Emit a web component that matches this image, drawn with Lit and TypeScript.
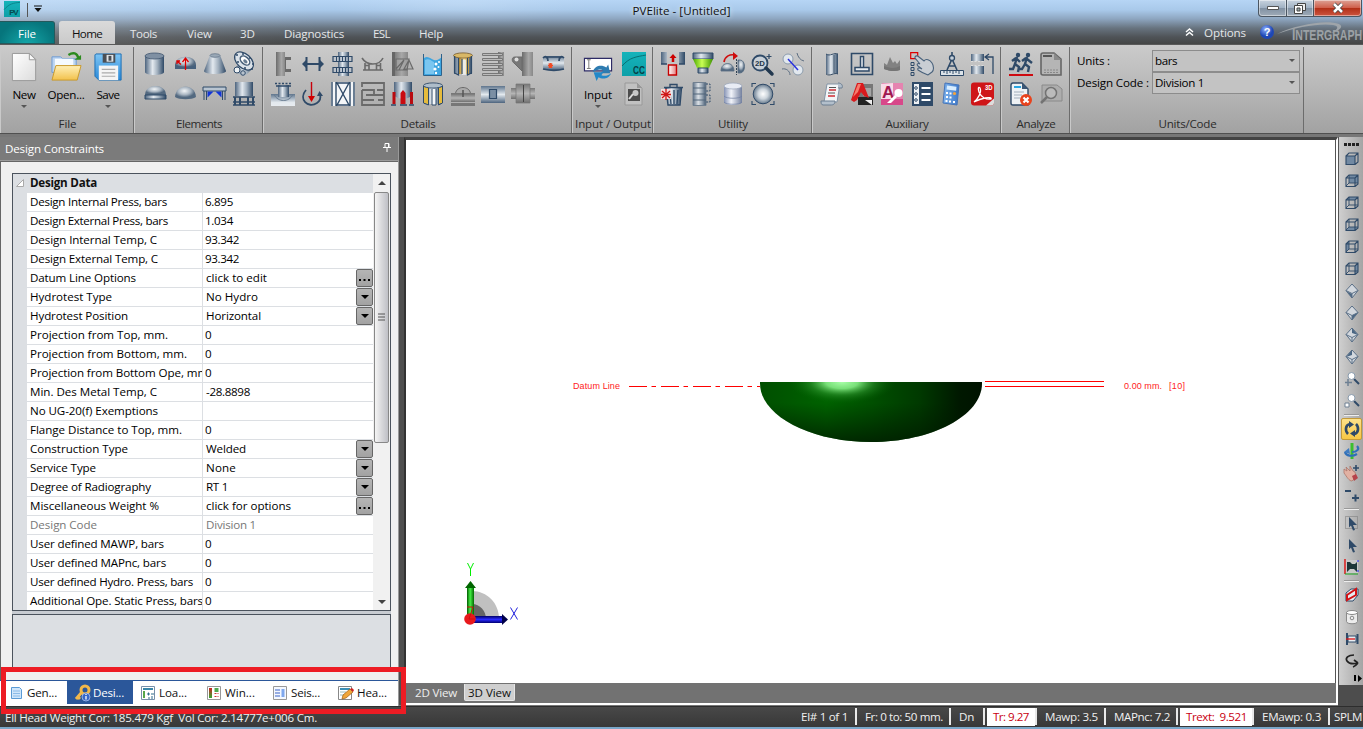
import { LitElement, html, svg, css, nothing } from "lit";
import { customElement, property } from "lit/decorators.js";

/** Text run whose tracking is adjusted so that it takes the given width. */
@customElement("ui-text")
class UiText extends LitElement {
  @property({ type: Number }) w = 0;
  @property() text = "";
  static styles = css`
    :host { display: inline-block; white-space: pre; }
    span { display: inline-block; white-space: pre; }
  `;
  render() {
    return html`<span>${this.text}</span>`;
  }
  firstUpdated() {
    if (!this.w || this.text.length < 2) return;
    const s = this.renderRoot.querySelector("span") as HTMLElement;
    const natural = s.getBoundingClientRect().width;
    s.style.letterSpacing = ((this.w - natural) / this.text.length).toFixed(3) + "px";
  }
}

const t = (text: string, w: number) => html`<ui-text .text=${text} .w=${w}></ui-text>`;

const N = "#2f4a68";
const G = "#6a6a6a";

const I: Record<string, unknown> = {
  cylinder: svg`<path d="M3 4v16c0 4 19 4 19 0V4z" fill="url(#st)"/><ellipse cx="12.5" cy="4" rx="9.5" ry="3" fill="#7f90a3" stroke="#40566f" stroke-width=".8"/>`,
  head: svg`<path d="M3 13c0-11 21-11 21 0v4H3z" fill="url(#rad)"/><path d="M3 12.500c4 3 17 3 21 0V17H3z" fill="#46607c"/><path d="M13.500 18V7M10.500 10l3-4 3 4M5 9l4 3.500M5 12V9h3" stroke="#d00" stroke-width="1.300" fill="none"/>`,
  cone: svg`<path d="M8 3L2 19c0 4 22 4 22 0L18 3z" fill="url(#st)"/><ellipse cx="13" cy="3.500" rx="5" ry="1.800" fill="#9aa8b6" stroke="#5a6d82" stroke-width=".7"/>`,
  flange: svg`<path d="M4 15l8-8 9 9-7 7c-3 2-12-2-10-8z" fill="url(#st)"/><ellipse cx="12" cy="9" rx="11" ry="7" transform="rotate(42 12 9)" fill="#dbe2e9" stroke="${N}" stroke-width="1.200"/><ellipse cx="13" cy="8.500" rx="5.500" ry="3.600" transform="rotate(42 13 8.500)" fill="#fff" stroke="#48607a" stroke-width="1.500"/><ellipse cx="13.500" cy="9" rx="2.500" ry="1.600" transform="rotate(42 13 9)" fill="#667b91"/><g fill="${N}"><circle cx="5" cy="3" r="1"/><circle cx="11" cy="2" r="1"/><circle cx="18" cy="6" r="1"/><circle cx="21" cy="12" r="1"/><circle cx="20" cy="17" r="1"/><circle cx="13" cy="16" r="1"/><circle cx="6" cy="10" r="1"/></g><circle cx="5" cy="18" r="3" fill="#eef2f5" stroke="${N}"/><circle cx="11" cy="21" r="2.300" fill="#b7c2cd" stroke="${N}"/>`,
  dome2: svg`<path d="M3 13C3 1 24 1 24 13z" fill="url(#rad)"/><path d="M3 13h21v4H3z" fill="url(#st)" stroke="${N}" stroke-width="1"/>`,
  dome: svg`<path d="M3 15C4 1 23 1 24 15c-4 3-17 3-21 0z" fill="url(#rad)"/>`,
  beam: svg`<path d="M1 5h23v4H1z" fill="#b9c5d1" stroke="${N}"/><path d="M2 9v9M4.500 9v9M20.500 9v9M23 9v9" stroke="${N}"/><path d="M5.500 9.500h6l-6 6zM19.500 9.500h-6l6 6z" fill="#1236d8"/>`,
  skirt: svg`<path d="M3 0h18v14H3z" fill="url(#st)"/><path d="M1 15h22M1 20h22M1 23h22" stroke="${N}" stroke-width="1.500"/><path d="M3 15v8M8 15v8M16 15v8M21 15v8" stroke="${N}" stroke-width="2"/>`,
  stiff: svg`<path d="M5 0h9v24H5z" fill="url(#gh)"/><path d="M14 6.500h6M14 18.500h6" fill="none" stroke="${G}" stroke-width="3"/><path d="M14.500 6v13" stroke="${G}"/>`,
  span: svg`<path d="M5.500 5v14M18.500 5v14" stroke="${N}" stroke-width="2"/><path d="M3 12h18" stroke="${N}" stroke-width="2"/><path d="M1 12l4-4v8zM23 12l-4-4v8z" fill="${N}"/>`,
  tubes: svg`<path d="M7 0h11v24H7z" fill="url(#st)"/><path d="M2 4.500h19v5H2zM2 15.500h19v5H2z" fill="#bac5d0" fill-opacity=".6" stroke="${N}" stroke-width="1.200"/><path d="M5.500 4v6M8.500 4v6M11.500 4v6M14.500 4v6M17.500 4v6M5.500 15v6M8.500 15v6M11.500 15v6M14.500 15v6M17.500 15v6" stroke="${N}"/>`,
  saddle: svg`<path d="M1 6c5 8 17 8 21 0M2 18h20M4 18v-7M19.500 18v-7M8 18v-6M15.500 18v-6M4 13.500h4M15.500 13.500h4" stroke="${G}" stroke-width="1.600" fill="none"/>`,
  tray: svg`<path d="M1 0h16v24H1z" fill="url(#gh)"/><path d="M1 0h3v24H1z" fill="#666"/><path d="M5 7h13l-2 11H5zM5 17l8-9M13 8l-5 10M13 17l5-9 4 9z" fill="#aaa" fill-opacity=".6" stroke="${G}" stroke-width="1.200"/>`,
  liquid: svg`<path d="M3 6c4-3 7 1 10 2s5-1 8-3v18H3z" fill="#3ea5e0"/><path d="M4 8c4-2 6 1 9 2v12H4z" fill="#a5dcfa" opacity=".6"/><path d="M2.500 2v21.500h18V2" fill="none" stroke="#2c628c" stroke-width="1"/><g fill="#fff"><circle cx="15" cy="12" r="1.500"/><circle cx="18" cy="10" r="1"/><circle cx="14" cy="17" r="1.600"/><circle cx="17.500" cy="15" r="1"/><circle cx="15" cy="21" r="1.200"/></g>`,
  insul: svg`<path d="M3 4h18v18H3z" fill="url(#st)"/><path d="M8 4h10v18H8z" fill="url(#gold)"/><path d="M11 8h4v15h-4z" fill="#ecf0f4" opacity=".8"/><ellipse cx="12" cy="3.500" rx="9.500" ry="2.600" fill="#d9b866" stroke="#76592a" stroke-width=".8"/><path d="M3.500 4v17l4 2V6M20.500 4v17l-4 2V6M11 7v15" stroke="${N}" fill="none" stroke-width="1.200"/>`,
  plates: svg`<path d="M17 0h6v24h-6z" fill="url(#gh)"/><g fill="#bbb" stroke="#777" stroke-width="1"><path d="M1.500 1.500h20v2h-20zM1.500 6.500h20v2h-20zM1.500 11.500h20v2h-20zM1.500 16.500h20v2h-20zM1.500 21.500h20v2h-20z"/></g>`,
  lug: svg`<path d="M11 0h11v24H11z" fill="url(#gh)"/><path d="M11 5H4c-4 0-3 5-1 6l8 8z" fill="#777" stroke="${G}"/><circle cx="5.500" cy="7.500" r="2" fill="#ddd"/>`,
  bolt: svg`<rect x="2" y="4" width="21" height="14" rx="3" fill="url(#sv)"/><path d="M2 6c3-3 5 0 5 3M23 6c-3-3-5 0-5 3M4 5h17M2 17c8 2 14 2 21 0" fill="none" stroke="${N}" stroke-width="1.700"/><path d="M7 13.500h5M9.500 11v5M7.700 11.500l3.500 4M11.200 11.500l-3.500 4" stroke="#f04a25" stroke-width="1.200"/>`,
  nozzle: svg`<path d="M0 12h24v12H0z" fill="url(#sv2)"/><path d="M7 3h11v12H7z" fill="url(#st)"/><path d="M3 12.500c4 8 15 8 19 0" fill="none" stroke="#6a7e93"/><path d="M4 1.500h17" stroke="${N}" stroke-width="1.500" stroke-dasharray="2 1.500"/><path d="M5 4h15" stroke="${N}" stroke-width="1.500"/>`,
  moment: svg`<path d="M5 8c-8 9 2 19 11 13 3-2 4-5 3-9" fill="none" stroke="${N}" stroke-width="1.800"/><path d="M16 14l2.500-5 3.500 5z" fill="${N}"/><path d="M10.500 0v18" stroke="#c8000a" stroke-width="1.400"/><path d="M7 14h7l-3.500 6z" fill="#d00000"/>`,
  brace: svg`<rect y="0" width="24" height="24" fill="#f4f6f8"/><path d="M1 0v24M5 0v24M19 0v24M23 0v24M5.500 0l13 24M18.500 0l-13 24M5 1h14M5 23h14" stroke="${N}" stroke-width="1.400"/>`,
  baffle: svg`<path d="M1 5V1h22v22H1V8M1 8h12v5M23 8h-7M1 18h12M5 13h18M17 18h6" fill="none" stroke="${G}" stroke-width="1.800"/>`,
  leg: svg`<path d="M3 0h18v13c-3 5-15 5-18 0z" fill="url(#st)"/><path d="M3 10v12M20.500 10v12" stroke="#b90b10" stroke-width="3"/><path d="M9.500 22V11L12 8l2.500 3v11z" fill="#c90b10"/><path d="M0 23h5M9 23h7M18 23h5" stroke="${N}" stroke-width="1.500"/>`,
  insul2: svg`<path d="M3 4h18v18H3z" fill="url(#st)"/><path d="M3 5l4 1v16l-4-1zM17 6l4-1v16l-4 1z" fill="#e6bb3c"/><path d="M11 7h4v16h-4z" fill="#f6f8fa"/><ellipse cx="12" cy="3.500" rx="9.500" ry="2.600" fill="#aebdca" stroke="${N}" stroke-width=".9"/><path d="M2.500 4v17l5 2V6M21.500 4v17l-4 2V6M11 7v16h4V7" stroke="${N}" fill="none"/>`,
  manway: svg`<path d="M0 12h24v8H0z" fill="url(#gv)"/><path d="M0 21h24v3H0z" fill="#777"/><path d="M4.500 11.500c1-8 14-8 15 0" fill="#aaa" stroke="${G}"/><path d="M0 11.500h24" stroke="#777"/><path d="M12 8v7" stroke="#555" stroke-width="1.500"/>`,
  pad: svg`<path d="M0 4h24v17H0z" fill="url(#sv)"/><path d="M8.500 7.500h7v9h-7z" fill="#7b8fa4" stroke="${N}" stroke-width="1.200"/>`,
  joint: svg`<path d="M0 6h24v11H0z" fill="url(#gv)"/><path d="M5 2h14v19H5z" fill="url(#gv)" stroke="#777" stroke-width=".7"/><path d="M12.500 3v17" stroke="#444"/>`,
  cc: svg`<path d="M0 0h24v24H0z" fill="url(#teal)"/><path d="M0 14C8 5 14 5 24 3" fill="none" stroke="#087073"/><text x="11" y="22" font-size="10" font-weight="700" fill="#073f45" font-family="Liberation Sans" textLength="12" lengthAdjust="spacingAndGlyphs">CC</text>`,
  keyfile: svg`<path d="M3 1h12l5 5v17H3z" fill="#c1c1c1" stroke="#999"/><path d="M15 1v5h5" fill="#999"/><path d="M6 7h12v12H6z" fill="#4d4d4d"/><circle cx="13.500" cy="11" r="3" fill="#c7c7c7"/><path d="M11 12l-4 5" stroke="#ddd" stroke-width="2"/>`,
  insert: svg`<path d="M0 0h6v12H0zM18 0h6v12h-6z" fill="url(#st)"/><path d="M0 12h6M18 12h6" stroke="${N}" stroke-width="1.500"/><path d="M12 10V5" stroke="#c00" stroke-width="2.500"/><path d="M8.500 6L12 2l3.500 4z" fill="#c00"/><path d="M7.500 13h8v10h-8z" fill="url(#pk)" stroke="#c70000" stroke-width="1.400"/>`,
  funnel: svg`<path d="M2 1h20v6H2z" fill="url(#st)" stroke="${N}"/><path d="M2 7h20l-4 9H6z" fill="url(#grn)"/><path d="M7 16h10v5H7z" fill="url(#st)" stroke="${N}"/>`,
  mirror: svg`<path d="M0 19C0 9 13 9 13 19z" fill="url(#rad)" stroke="#566b80" stroke-width=".8"/><path d="M17 8h2c6 0 6 13 0 13h-2z" fill="url(#rad)" stroke="#566b80" stroke-width=".8"/><path d="M15.500 7v16" stroke="#345" stroke-dasharray="2 1"/><path d="M3 10c1-6 6-8 11-7" fill="none" stroke="#ce0d0d" stroke-width="1.700"/><path d="M12 0l5 4-5 4z" fill="#ce0d0d"/>`,
  zoom2d: svg`<circle cx="9" cy="11" r="7.500" fill="#c8d0d8" stroke="${N}" stroke-width="1.800"/><path d="M15 16l6 6" stroke="#22384f" stroke-width="3.500" stroke-linecap="round"/><path d="M18 2v5M15.500 4.500h5" stroke="${N}" stroke-width="1.200"/><text x="4" y="14" font-size="8" font-weight="700" fill="#24364a" font-family="Liberation Sans" textLength="10" lengthAdjust="spacingAndGlyphs">2D</text>`,
  nodes: svg`<circle cx="7" cy="7" r="5" fill="#e2e8ee" stroke="#8c9cad"/><circle cx="17" cy="18" r="5" fill="#e2e8ee" stroke="#8c9cad"/><path d="M7 7l10 11" stroke="#2930de" stroke-width="1.500"/><path d="M16 1c1 4 3 7 7 8M1 17c4-1 8 2 8 6" fill="none" stroke="#5c6e82"/>`,
  trash: svg`<path d="M4 6h16l-1.500 17h-11z" fill="url(#st)"/><path d="M3 5.500h19M9 5V2.500h7V5M9 9l1 13M13 8v14M17 8l-1 14M5 6l2 17h12l1.500-17" stroke="${N}" stroke-width="1.400" fill="none"/><path d="M0 7h10v10H0z" fill="#f4dada"/><path d="M1 9l8 7M9 9l-8 7M5 7v11M0 12.500h10" stroke="#d01818" stroke-width="1.300"/>`,
  stack: svg`<path d="M2 .5h13v23H2z" fill="url(#st)" stroke="#66788b" opacity=".85"/><path d="M2 6h13M2 12h13M2 18h13" stroke="#53667a"/><path d="M15 2h4v7h-4M15 13h4v7h-4" stroke="${N}" fill="none" stroke-dasharray="2 1.200"/>`,
  tank: svg`<path d="M3 4v16c0 4 18 4 18 0V4z" fill="url(#tk)"/><ellipse cx="12" cy="4" rx="9" ry="3" fill="#e8ecf5" stroke="#9aa5b9" stroke-width=".7"/><path d="M3 14c2 3 16 3 18 0M3 20c2 3 16 3 18 0" stroke="#6f7ea0" stroke-width=".7" fill="none"/>`,
  sphere: svg`<circle cx="12" cy="12" r="9.800" fill="url(#ball)" stroke="${N}"/><path d="M1 5V1.500h4M19 1.500h4V5M23 19v3.500h-4M5 22.500H1V19" fill="none" stroke="${N}" stroke-width="1.100"/>`,
  shell: svg`<path d="M6 2h12v20H6z" fill="url(#st)"/><path d="M6 2c4 3 8-2 12 0M6 22c4 3 8-2 12 0M14 3v18" stroke="#3d536b" fill="none"/>`,
  base: svg`<path d="M1.500 1.500h21v21h-21z" fill="none" stroke="${N}" stroke-width="1.600"/><path d="M10.500 4.500h3v11h-3zM5 15.500h14v3.500H5z" fill="#e8ecf0" stroke="${N}" stroke-width="1.500"/>`,
  quake: svg`<path d="M4 11l3 2 3-8 3 6 2-2 2 3 3-4v10c-5 2-11 1-16-1z" fill="#828282"/><path d="M4 14v3c5 2 11 3 16 1v-4c-5 3-11 2-16 0z" fill="#747474"/>`,
  hand: svg`<path d="M.7.700h7v6h-7z" fill="none" stroke="#d00" stroke-width="1.200"/><path d="M1 10.500h3v3H1zM1 15.500h3v3H1zM1 20.500h3v3H1z" fill="none" stroke="${N}"/><path d="M5 5c1-2 3-1 4 0l5 4c2-3 6-1 8 2s2 7 0 9l-4 3c-3-1-7-3-10-5-1-2 1-3 4-1l-4-3c-2-2 0-3 2-2L5 6z" fill="#c9ced4" stroke="#49617b" stroke-width="1.100"/>`,
  compass: svg`<path d="M12 0v4M12 7L7 18M12 7l5 11M8.500 14h7" stroke="${N}" stroke-width="1.600"/><circle cx="12" cy="6" r="2.500" fill="#c5d0da" stroke="${N}" stroke-width="1.300"/><path d="M.5 18.500h23v5H.5z" fill="#dce3e9" stroke="${N}"/><path d="M4 19v2M7 19v3M10 19v2M13 19v3M16 19v2M19 19v3" stroke="${N}"/>`,
  swap: svg`<path d="M1 2h13v7H1zM1 14h13v8H1z" fill="url(#st)"/><path d="M1 9.500h13M1 13.500h13" stroke="#ddd" stroke-dasharray="2 1.500"/><path d="M23 22V5h-7M19 2l-4 3 4 3" stroke="${N}" fill="none" stroke-width="1.300"/>`,
  script: svg`<path d="M7 2h13l-3 18H4z" fill="#f3f5f7" stroke="#8495a6"/><path d="M18 1c4 0 5 3 4 5h-4M1 19h14c0 4-3 4-4 4H3c-2 0-2-3-2-4z" fill="#b3bfcb" stroke="#6c7e91"/><path d="M9 5.500h7M8 11h7" stroke="#555"/><path d="M9 8h7M8 14h7" stroke="#cf2c34" stroke-width="1.300"/>`,
  acad: svg`<path d="M9 2h14v21H9z" fill="#777"/><path d="M8 15h15v8H8z" fill="#222"/><path d="M12 6h9v8h-8z" fill="#a5a5a5"/><path d="M1 18L7 1h6l6 15-5-2-3-4-4 8-3 2z" fill="#d91a1d"/><path d="M3 15L8 2h3l-3 8z" fill="#f67c6d"/><path d="M15 18h7v5z" fill="#eee"/>`,
  access: svg`<path d="M2 1h21v22H1z" fill="#e583b0"/><path d="M1 2l12-1v22H1z" fill="#f8dbe8"/><path d="M1 17h22v6H1z" fill="#d8488a"/><text x="2" y="16" font-size="17" font-weight="700" fill="#a01850" font-family="Liberation Sans">A</text><circle cx="18.500" cy="11" r="4" fill="#fff"/><path d="M15 13l-8 8h4l6-6z" fill="#fff"/>`,
  list: svg`<path d="M3 1h19v22H3z" fill="#eef1f4" stroke="${N}" stroke-width="2"/><path d="M9 1h13v22H9z" fill="${N}"/><path d="M11.500 6h9M11.500 12h9M11.500 18h9" stroke="#fff" stroke-width="1.800"/><g fill="none" stroke="${N}"><circle cx="6" cy="6" r="1.300"/><circle cx="6" cy="12" r="1.300"/><circle cx="6" cy="18" r="1.300"/></g>`,
  calc: svg`<path d="M5 1l14 2-2 20-14-2z" fill="url(#bl)" stroke="#4674b8"/><path d="M7 3.500l9.500 1.300-.4 4L6.500 7.500z" fill="#d8edff"/><g fill="#fff"><path d="M6 10h2v2H6zM9.500 10.500h2v2h-2zM6 14h2v2H6zM9.500 14.500h2v2h-2zM5.500 18h2v2h-2zM9 18.500h2v2H9zM13 19h2v2h-2z"/></g><circle cx="14.500" cy="11.500" r="1.600" fill="#f6a33a"/>`,
  pdf3d: svg`<rect x="1" y=".5" width="23" height="23" rx="3" fill="#cf1518"/><path d="M4 20c4-3 8-10 6-14-2-2-2 1-1 4 2 5 7 8 12 7 1-1-2-2-6-1-5 1-9 3-11 4z" fill="none" stroke="#fff" stroke-width="1.300"/><text x="15" y="8" font-size="6.500" font-weight="700" fill="#fff" font-family="Liberation Sans" textLength="7.500" lengthAdjust="spacingAndGlyphs">3D</text><path d="M16 23.500h5c2 0 3-1 3-3v-4z" fill="#ddd"/>`,
  run: svg`<g fill="none" stroke="${N}" stroke-width="2.400"><path d="M8 5L6 12l4 3-1 5M6 12l-2 5H0M7 6L3 9M8 7l3 3M18 5l-2 7 4 3-1 5M16 12l-3 5h-3M17 6l-4 3M18 7l5 4"/></g><circle cx="9" cy="3" r="2.200" fill="${N}"/><circle cx="19" cy="3" r="2.200" fill="${N}"/><path d="M0 23h24" stroke="#ce0a10" stroke-width="2"/>`,
  review: svg`<path d="M4 1h11l7 6v16H4c-2 0-2-2-2-2V3c0-2 2-2 2-2z" fill="#b5b5b5" stroke="#666" stroke-width="1.600"/><path d="M15 1v7h7" fill="#8a8a8a"/><path d="M4 4h9" stroke="#555" stroke-width="2"/><path d="M5 18h14M5 20.500h14" stroke="#888" stroke-dasharray="2 1"/>`,
  errdoc: svg`<path d="M4 1h9l6 6v16H4c-2 0-2-2-2-2V3c0-2 2-2 2-2z" fill="#eef2f5" stroke="${N}" stroke-width="1.400"/><path d="M13 1v6h6" fill="#3b5775"/><path d="M5 5h7" stroke="#2aa6e2" stroke-width="2"/><path d="M5 10h10M5 13h8M5 16h6" stroke="#a0adba"/><circle cx="17" cy="18" r="6" fill="#e8431d"/><path d="M14.500 15.500l5 5M19.500 15.500l-5 5" stroke="#fff" stroke-width="2.200"/>`,
  find: svg`<path d="M3 3h15l5 4v12H3z" fill="#adadad" stroke="#8a8a8a"/><circle cx="12" cy="11" r="5.500" fill="#bbb" stroke="#737373" stroke-width="1.500"/><path d="M8 15l-6 6" stroke="#737373" stroke-width="2.500"/>`,
};

const B: Record<string, unknown> = {
  new: svg`<path d="M3.500 1.500h18l6 6v22h-24z" fill="url(#paper)" stroke="#999"/><path d="M21 1.500V8h6.500z" fill="#fafafa" stroke="#999"/>`,
  open: svg`<path d="M1 5h9l2 2h14v14H1z" fill="#bcd4f0" stroke="#6b9ad3"/><path d="M4 7h19v9H4z" fill="#f5faff"/><path d="M5 14h26l-4 15H1z" fill="url(#fold)" stroke="#c99a2b"/><path d="M18 3c5-3 9-2 10 3" fill="none" stroke="#2c8a1e" stroke-width="2.400"/><path d="M24 5h7v-5z" transform="translate(0 3)" fill="#2c8a1e"/>`,
  save: svg`<path d="M3 2h26v27H6l-4-4V3z" fill="url(#dsk)" stroke="#1d6fb5"/><path d="M10 2h13v9H10z" fill="#4a4f55"/><path d="M14 3h7v7h-7z" fill="#dfe3e6"/><path d="M16 4h3v5h-3z" fill="#4a4f55"/><path d="M6 14h20v15H6z" fill="#f5f5f5"/><path d="M9 18h14M9 21.500h14M9 25h14" stroke="#aaa" stroke-width="1.200"/>`,
  input: svg`<path d="M1.500 6.500h28v13h-28z" fill="#fff" stroke="#2d2b66" stroke-width="1.200"/><path d="M4 8h4M6 8v9M4 17h4" stroke="#777" fill="none"/><path d="M10 21c2-8 10-8 14-5l2-3 2 9h-10l3-3c-3-2-7-1-11 2z" fill="#2d7bb0"/><path d="M29 22c-3 7-10 6-13 4l-2 4-3-9h10l-2 3c3 1 6 1 10-2z" fill="#2288c8"/>`,
};

const cubeFace: Record<string, string> = {
  f: "M2 5h9v8H2z", b: "M5 2h9v8H5z", t: "M2 5l3-3h9l-3 3z", d: "M2 13h9l3-3H5z", l: "M2 5l3-3v8l-3 3z", r: "M11 5l3-3v8l-3 3z",
};
const cube = (f: string) => svg`<path d="${cubeFace[f]}" fill="#7189a2"/><path d="M2 5h9v8.500H2zM2 5l3-3h9v9l-3 2.500M11 5l3-3" fill="none" stroke="${N}" stroke-width="1.100"/>${f === "f" ? nothing : svg`<path d="M5 2v8h9M5 10l-3 3" fill="none" stroke="${N}" stroke-width=".9"/>`}`;
const isoFace = ["M2 8l6 3v4z", "M8 10.500l6-3L8 15z", "M8 1l6 7-6-2z", "M8 1L2 8l6-2z"];
const iso = (i: number) => svg`<path d="M8 1l6 6.500L8 15 2 7.500z" fill="#d3d8de"/><path d="${isoFace[i]}" fill="#4a6683"/><path d="M8 1l6 6.500L8 15 2 7.500zM2 7.500l6 3 6-3M8 10.500V15" fill="none" stroke="#5b7087" stroke-width="1"/>`;
const mag = svg`<path d="M10 8l5 5" stroke="${N}" stroke-width="2"/><circle cx="7.500" cy="5" r="3.500" fill="#fff" stroke="#889aac"/>`;

const tools: unknown[] = [
  cube("f"), cube("b"), cube("t"), cube("d"), cube("l"), cube("r"), iso(0), iso(1), iso(2), iso(3),
  svg`${mag}<path d="M4 8v7M1 11.500h7" stroke="#6e8093" stroke-width="1.500"/>`,
  svg`${mag}<path d="M1 10h4v4H1z" fill="#fff" stroke="#6e8093"/>`,
  "sep",
  "active",
  svg`<path d="M8 0v16" stroke="#3bbf2d" stroke-width="3"/><path d="M13 3c3 3 0 6-5 6M1 9c1 4 7 5 12 2" fill="none" stroke="#2f6fb8" stroke-width="2.200"/><path d="M5 5L0 9l6 2z" fill="#3f7cc0"/>`,
  svg`<path d="M0 4l3 2-1-4 4 4 0-5 3 5 2 1 1 5-4 4c-3 0-5-4-8-8z" fill="#e2b1a3" stroke="#a96e62" stroke-width=".7"/><path d="M8 11l4-2 2 4-4 3z" fill="#b6434b"/><path d="M12 0v6M9 3h6" stroke="${N}" stroke-width="1.600"/>`,
  svg`<path d="M1 4h6M8 11h7M11.500 7.500v7" stroke="${N}" stroke-width="2"/>`,
  "sep",
  svg`<path d="M1.500 1.500h12v12h-12z" fill="none" stroke="#777" stroke-dasharray="1 1"/><path d="M5 2l8 8H9l2 5-2 .5-2-5-2 2z" fill="${N}"/>`,
  svg`<path d="M5 2l8 8H9l2 5-2 .5-2-5-2 2z" fill="${N}"/>`,
  svg`<path d="M1 1h13v13H1z" fill="#c9c9c9"/><path d="M3 3h3l2 2h3l2-2v10l-3-3H6l-3 3z" fill="#1d3538"/><path d="M1 0v15" stroke="#d11" stroke-width="1.400"/><path d="M1 15h13" stroke="#19a51e"/><path d="M14 1v13" stroke="#22f" stroke-dasharray="2 8"/>`,
  "sep",
  svg`<path d="M2 6l5-4h7v6l-5 6H2z" fill="#e6ecf2" stroke="${N}"/><path d="M3 13V8l9-6v6z" fill="none" stroke="#d11316" stroke-width="2"/>`,
  svg`<path d="M2.500 3.500v9c0 3 11 3 11 0v-9z" fill="#ececec" stroke="#8a8a8a"/><ellipse cx="8" cy="3.500" rx="5.500" ry="2" fill="#fff" stroke="#8a8a8a"/><circle cx="8" cy="9" r="1.800" fill="none" stroke="#888"/>`,
  svg`<path d="M3 2v12" stroke="${N}" stroke-width="2"/><path d="M4 5h8v6H4z" fill="#e8edf2" stroke="${N}"/><path d="M13.500 3v10" stroke="${N}" stroke-width="2"/><path d="M2 8h9" stroke="#d11" stroke-width="1.300"/>`,
  svg`<path d="M10 2C4 2 1 5 3 8s7 3 11 2M14 10c-1 1-2 3-5 4M10 7l4 3" fill="none" stroke="#222" stroke-width="1.700"/>`,
];

type Row = [string, number, string, number, string?];
const rows: Row[] = [
  ["Design Internal Press, bars", 137, "6.895", 28],
  ["Design External Press, bars", 138, "1.034", 28],
  ["Design Internal Temp, C", 127, "93.342", 34],
  ["Design External Temp, C", 128, "93.342", 34],
  ["Datum Line Options", 106, "click to edit", 61, "..."],
  ["Hydrotest Type", 82, "No Hydro", 52, "v"],
  ["Hydrotest Position", 98, "Horizontal", 55, "v"],
  ["Projection from Top, mm.", 138, "0", 0],
  ["Projection from Bottom, mm.", 157, "0", 0],
  ["Projection from Bottom Ope, mm.", 181, "0", 0],
  ["Min. Des Metal Temp, C", 127, "-28.8898", 44, "in"],
  ["No UG-20(f) Exemptions", 128, "", 0],
  ["Flange Distance to Top, mm.", 152, "0", 0],
  ["Construction Type", 98, "Welded", 40, "v"],
  ["Service Type", 66, "None", 30, "v"],
  ["Degree of Radiography", 121, "RT 1", 22, "v"],
  ["Miscellaneous Weight %", 129, "click for options", 85, "..."],
  ["Design Code", 67, "Division 1", 50, "dis"],
  ["User defined MAWP, bars", 134, "0", 0],
  ["User defined MAPnc, bars", 136, "0", 0],
  ["User defined Hydro. Press, bars", 163, "0", 0],
  ["Additional Ope. Static Press, bars", 173, "0", 0],
];

const pageTabs: [string, number, unknown][] = [
  ["Gen...", 30, svg`<path d="M3.500 2.500h8l2 2v9h-10z" fill="#cfe6fb" stroke="#5b9bd5"/><path d="M5 6h7M5 8.500h7M5 11h7" stroke="#8abbe8"/>`],
  ["Desi...", 31, svg`<circle cx="11" cy="5" r="4" fill="none" stroke="#f2b84b" stroke-width="3"/><path d="M8 7l-6 7M4 12l2 2" stroke="#f2b84b" stroke-width="3"/><circle cx="12" cy="12" r="4" fill="#3667c9" stroke="#bcd0f5" stroke-width=".7"/><path d="M12 11v3.500M12 9v1" stroke="#fff" stroke-width="1.300"/>`],
  ["Loa...", 28, svg`<path d="M1.500 1.500h13v13h-13z" fill="#fff" stroke="#7790aa"/><path d="M3 3h10v2H3z" fill="#3a86a8"/><path d="M3 6h2v7H3z" fill="#57a64a"/><path d="M7 9h3M8.500 7.500v3M11 9h3M8 13h2M12 11v3" stroke="#2c6b8a"/>`],
  ["Win...", 30, svg`<path d="M1.500 1.500h13v13h-13z" fill="#fff" stroke="#999"/><path d="M3 3h3v10H3z" fill="url(#wnd)"/><path d="M8.500 3h4v4h-4z" fill="#4fa84e"/><path d="M8.500 8.500h4M8.500 11.500h4" stroke="#c33" stroke-dasharray="2 1"/>`],
  ["Seis...", 29, svg`<path d="M1.500 1.500h13v13h-13z" fill="#f4f8ff" stroke="#999"/><path d="M3 5h5M3 8h5M3 11h5" stroke="#3a63c8" stroke-width="1.200"/><path d="M9.500 4h3v8h-3z" fill="#7fa8ee"/>`],
  ["Hea...", 30, svg`<path d="M.5 1.500h13v13h-13z" fill="#fff" stroke="#888"/><path d="M2 3h10v2H2z" fill="#3c8fb5"/><path d="M2 7h6M2 10h4" stroke="#9bb"/><path d="M4 14l1-4 7-6 3 3-7 6z" fill="#f0a63a" stroke="#9c5d13" stroke-width=".7"/><path d="M12 4l2-1 2 2-1 2z" fill="#c22"/>`],
];

/** Status cells: text, text width, cell width, highlighted. */
const cells: [string, number, number, boolean?][] = [
  ["El# 1 of 1", 47, 64], ["Fr: 0 to: 50 mm.", 78, 94], ["Dn", 15, 34], ["Tr: 9.27", 36, 48, true],
  ["Mawp: 3.5", 53, 69], ["MAPnc: 7.2", 56, 72], ["Trext:  9.521", 61, 72, true], ["EMawp: 0.3", 59, 76],
];

const icons = (names: string[]) => html`<div class="row">${names.map((n) => html`<svg class="ic" viewBox="0 0 24 24">${I[n]}</svg>`)}</div>`;
const arrow = html`<i class="arr"></i>`;
const big = (k: string, label: string, w: number, dd = true) => html`
  <div class="big"><svg class="bi" viewBox="0 0 32 32">${B[k]}</svg>${t(label, w)}${dd ? arrow : nothing}</div>`;

const valueCell = (v: string, vw: number, b?: string) => html`<div class="v ${b ? "in" : ""}">${t(v, vw)}${b === "v" || b === "..."
  ? html`<span class="btn">${b === "v" ? arrow : html`<svg width="11" height="8"><path d="M0 5h2v2H0zM4.500 5h2v2h-2zM9 5h2v2H9z"/></svg>`}</span>` : nothing}</div>`;

@customElement("app-root")
class AppRoot extends LitElement {
  static styles = css`
    :host { display: block; width: 1363px; height: 729px; overflow: hidden; position: relative;
      font: 11.6px/18px "Open Sans", "Noto Sans", sans-serif; color: #111; background: #727272; }
    * { box-sizing: border-box; }
    svg { display: block; flex: none; overflow: visible; }
    .defs { position: absolute; width: 0; height: 0; }
    .app { display: flex; flex-direction: column; height: 729px; }
    .top { height: 44px; display: flex; flex-direction: column; flex: none;
      background: radial-gradient(ellipse 130px 20px at 460px 4px, rgba(255,255,255,.15), transparent), linear-gradient(90deg, rgba(255,255,255,.18), transparent 320px), linear-gradient(#b6d5f5 0, #a9c9ea 10px, #8da5bf 19px, #687480 28px, #4f5357 37px, #444646 44px); }
    .title { height: 21px; display: grid; grid-template-columns: 1fr 98px 1fr; }
    .quick { display: flex; align-items: flex-start; padding: 1px 0 0 4px; }
    .quick b { width: 1px; height: 14px; background: #555; margin: 2px 0 0 7px; }
    .quick .qa { margin: 4px 0 0 6px; }
    .name { padding-top: 2px; text-shadow: 0 0 5px #fff; }
    .win { display: flex; justify-content: flex-end; padding-right: 1px; }
    .win span { height: 17px; border: 1px solid #4b5662; border-top: 0; box-shadow: inset 0 0 0 1px rgba(255,255,255,.45); display: flex; justify-content: center; align-items: center; background: linear-gradient(#c8d3df, #9fb0c2 50%, #8090a2 50%, #9fabb8); }
    .wmin { width: 29px; border-radius: 0 0 0 4px; }
    .wres { width: 27px; border-left: 0 !important; }
    .wclose { width: 48px; border-left: 0 !important; border-radius: 0 0 4px 0; background: linear-gradient(#dda296, #cf5d49 50%, #b12e16 50%, #cc5540) !important; }
    .tabs { display: flex; height: 23px; align-items: stretch; color: #e4e6e8; }
    .tabs > span { flex: none; padding-top: 4px; }
    .tabs .file { width: 55px; padding: 3px 0 0 18px; color: #fff; background: radial-gradient(ellipse at 50% 110%, #15a8aa, #06757c 75%); border: 1px solid #25595c; border-radius: 0 3px 0 0; border-left: 0; }
    .tabs .home { margin-left: 4px; width: 56px; background: linear-gradient(#dadada, #cacaca); color: #111; padding-left: 13px; border-radius: 3px 3px 0 0; }
    .tabs .m1 { width: 57px; margin-left: 15px; } .tabs .m2 { width: 53px; } .m3 { width: 44px; } .m4 { width: 89px; } .m5 { width: 46px; }
    .opts { margin-left: auto; display: flex; padding-top: 3px; }
    .chev { margin: 4px 10px 0 0; } .help { margin: 0 7px 0 14px; } .ig { margin-top: -3px; }
    .ribbon { height: 90px; flex: none; display: flex; background: linear-gradient(#cbcbcb, #b9b9b9 45%, #a2a2a2); border-top: 1px solid #5a5a5a; border-bottom: 1px solid #505050; }
    .grp { display: flex; flex-direction: column; border-right: 1px solid #6c6c6c; box-shadow: inset 1px 0 #c9c9c9; flex: none; margin-top: 2px; color: #222; }
    .body { height: 69px; display: flex; }
    .rows { display: flex; flex-direction: column; gap: 6px; padding: 5px 0 0 8px; }
    .row { display: flex; gap: 6px; }
    .ic { width: 24px; height: 24px; }
    .lab { text-align: center; height: 18px; color: #2b2b2b; padding-left: 2px; }
    .g0 { width: 134px; } .g1 { width: 129px; } .g2 { width: 309px; } .g3 { width: 81px; } .g4 { width: 159px; } .g5 { width: 189px; } .g6 { width: 69px; } .g7 { width: 234px; }
    .big { width: 42px; display: flex; flex-direction: column; align-items: center; padding-top: 5px; color: #000; }
    .g0 .body { padding-left: 3px; }
    .bi { width: 31px; height: 31px; margin-bottom: 3px; }
    .arr { border: 3px solid transparent; border-top: 3px solid #555; border-bottom: 0; margin-top: 1px; }
    .g3 .big { padding-left: 4px; width: 48px; }
    .g3 .rows { padding-left: 2px; }
    .form { display: grid; grid-template-columns: 75px 148px; grid-auto-rows: 22px; padding: 3px 0 0 7px; color: #000; height: 69px; }
    .form .lb { padding-top: 2px; white-space: nowrap; }
    .sel { border: 1px solid #8c8c8c; background: #c3c3c3; display: flex; justify-content: space-between; align-items: center; padding: 0 4px 1px 2px; }
    .sel .arr { margin: 0; }
    .main { flex: 1; display: flex; min-height: 0; padding-top: 3px; background: #777; }
    .left { width: 399px; flex: none; display: flex; flex-direction: column; border-right: 1px solid #999; }
    .ph { height: 24px; background: #7b7b7b; color: #fff; padding: 3px 7px 0 5px; display: flex; justify-content: space-between; border-bottom: 1px solid #9a9a9a; flex: none; }
    .pb { flex: 1; background: #f0f0f0; border: 1px solid #666; border-width: 1px 0 0 1px; padding: 11px 8px 0 11px; display: flex; flex-direction: column; min-height: 0; }
    .grid { height: 438px; border: 1px solid #4b535d; display: flex; flex: none; background: #dcdfe3; width: 379px; }
    .tree { width: 14px; padding: 5px 0 0 3px; }
    .tbl { width: 346px; overflow: hidden; }
    .cat { height: 19px; font-weight: 700; padding-left: 3px; }
    .r { height: 19px; display: flex; background: #fff; border-bottom: 1px solid #dcdfe3; color: #000; }
    .r.dis { color: #777; }
    .k { width: 176px; border-right: 1px solid #dcdfe3; padding-left: 3px; overflow: hidden; flex: none; display: flex; }
    .k ui-text, .v ui-text { flex: none; }
    .v { flex: 1; padding-left: 2px; display: flex; justify-content: space-between; }
    .v.in { padding-left: 3px; }
    .btn { width: 17px; height: 18px; border: 1px solid #666; border-radius: 2px; background: linear-gradient(#b5b5b5, #a2a2a2); display: flex; justify-content: center; align-items: center; }
    .btn .arr { border-width: 4px 4px 0 4px; border-top-color: #000; margin: 0; }
    .sb { width: 17px; background: #f1f1f1; display: flex; flex-direction: column; align-items: center; }
    .sb .up { border: 4px solid transparent; border-bottom: 4px solid #444; border-top: 0; margin: 7px 0 7px; }
    .sb .dn { border: 4px solid transparent; border-top: 4px solid #444; border-bottom: 0; margin: auto 0 6px; }
    .thumb { width: 15px; height: 251px; border: 1px solid #888; border-radius: 2px; background: linear-gradient(90deg, #f5f5f5, #d9d9dc 50%, #bfc0c6); display: flex; align-items: center; justify-content: center; }
    .desc { margin-top: 3px; width: 379px; flex: 1; border: 1px solid #4b535d; background: #dcdfe3; margin-bottom: 9px; box-shadow: 0 -3px #c8ccd2; }
    .pt { height: 26px; flex: none; background: #fff; border-top: 1px solid #2b579a; display: flex; padding-left: 1px; color: #111; }
    .pt div { width: 66px; height: 23px; display: flex; align-items: center; gap: 3px; padding-left: 7px; }
    .pt div.on { background: #2b579a; color: #fff; }
    .view { flex: 1; margin-left: 5px; border-left: 2px solid #333; display: flex; flex-direction: column; border-bottom: 2px solid #fff; margin-bottom: 1px; box-shadow: -5px 0 #4f4f4f; border-top: 3px solid #444; border-right: 2px solid #fff; min-width: 0; }
    .canvas { width: 930px; height: 543px; background: #fff; flex: none; }
    .vt { display: flex; color: #eee; padding: 1px 0 0 9px; gap: 7px; background: #727272; flex: 1; }
    .vt .on { background: #cfcfcf; color: #111; border: 1px solid #e5e5e5; border-top: 0; border-radius: 0 0 2px 2px; height: 17px; padding: 0 3px; line-height: 18px; }
    .vt span:first-child { line-height: 18px; }
    .tools { width: 25px; flex: none; display: flex; flex-direction: column; background: #4d4d4d; }
    .tb { height: 548px; background: linear-gradient(90deg, #cfcfcf, #a5a5a5); border-left: 1px solid #555; display: flex; flex-direction: column; align-items: center; padding: 6px 0 0 1px; }
    .dots { width: 15px; height: 3px; background: repeating-linear-gradient(90deg, #222 0 3px, transparent 3px 4px); margin-bottom: 2px; flex: none; }
    .tool { width: 21px; height: 22px; padding: 3px 0 0 3px; flex: none; }
    .tool svg { width: 16px; height: 16px; }
    .tool.act { background: linear-gradient(#fde28a, #f7c745); border: 1px solid #c39a39; border-radius: 2px; padding: 2px; }
    .sep { width: 15px; height: 2px; background: #eee; border-top: 1px solid #999; margin: 2px 0; flex: none; }
    .more { margin: 3px 0 0 12px; }
    .status { height: 21px; flex: none; background: linear-gradient(#484848, #383838); color: #f0f0f0; display: flex; justify-content: space-between; padding-left: 5px; line-height: 21px; border-top: 1px solid #2d2d2d; }
    .seg { display: flex; align-items: flex-start; }
    .seg span { border-right: 2px solid #e8e8e8; height: 17px; margin-top: 1px; line-height: 18px; padding-left: 8px; flex: none; }
    .seg .box { background: #fff; color: #c8000f; padding-left: 6px; border-right: 1px solid #fff; margin: 1px 0 0 2px; height: 18px; }
    .seg .gap { padding: 0; width: 2px; }
    .seg .last { width: 33px; border: 0; padding-left: 4px; }
    .task { height: 2px; background: #7aa7c9; flex: none; }
    .mark { position: absolute; left: 1px; top: 667px; width: 405px; height: 47px; border: 5px solid #ed1c24; }
  `;

  render() {
    return html`
      <svg class="defs"><defs>
        <linearGradient id="st"><stop stop-color="#4d647e"/><stop offset=".4" stop-color="#e3e9ef"/><stop offset=".65" stop-color="#a3b1bf"/><stop offset="1" stop-color="#2f4966"/></linearGradient>
        <linearGradient id="sv" x2="0" y2="1"><stop stop-color="#5f758d"/><stop offset=".5" stop-color="#e3e9ee"/><stop offset="1" stop-color="#4d647e"/></linearGradient>
        <linearGradient id="sv2" x2="0" y2="1"><stop stop-color="#5f758d"/><stop offset=".7" stop-color="#e3e9ee"/><stop offset="1" stop-color="#e8ecf0"/></linearGradient>
        <linearGradient id="gh"><stop stop-color="#6c6c6c"/><stop offset=".6" stop-color="#a8a8a8"/><stop offset="1" stop-color="#888"/></linearGradient>
        <linearGradient id="gv" x2="0" y2="1"><stop stop-color="#777"/><stop offset=".5" stop-color="#b5b5b5"/><stop offset="1" stop-color="#6f6f6f"/></linearGradient>
        <linearGradient id="gold"><stop stop-color="#b98a2b"/><stop offset=".5" stop-color="#fbe9b0"/><stop offset="1" stop-color="#c6993b"/></linearGradient>
        <linearGradient id="teal" x2="0" y2="1"><stop stop-color="#15b3ba"/><stop offset="1" stop-color="#0da0a8"/></linearGradient>
        <linearGradient id="pk"><stop stop-color="#fff"/><stop offset="1" stop-color="#e47d7d"/></linearGradient>
        <linearGradient id="grn"><stop stop-color="#49a800"/><stop offset=".45" stop-color="#c9ff54"/><stop offset="1" stop-color="#3c9200"/></linearGradient>
        <linearGradient id="tk"><stop stop-color="#8794b5"/><stop offset=".4" stop-color="#f2f4fa"/><stop offset="1" stop-color="#74819f"/></linearGradient>
        <linearGradient id="bl"><stop stop-color="#7fb4ee"/><stop offset="1" stop-color="#3d78c8"/></linearGradient>
        <linearGradient id="paper" x2="1" y2="1"><stop stop-color="#fff"/><stop offset="1" stop-color="#dcdcdc"/></linearGradient>
        <linearGradient id="fold" x2="0" y2="1"><stop stop-color="#fff0b8"/><stop offset="1" stop-color="#f2c14b"/></linearGradient>
        <linearGradient id="dsk" x2="0" y2="1"><stop stop-color="#7ec5f4"/><stop offset="1" stop-color="#2989d8"/></linearGradient>
        <linearGradient id="wnd" x2="0" y2="1"><stop stop-color="#c22"/><stop offset="1" stop-color="#3a3"/></linearGradient>
        <radialGradient id="rad" cx=".45" cy=".35"><stop stop-color="#f3f6f8"/><stop offset=".6" stop-color="#a9b5c1"/><stop offset="1" stop-color="#536980"/></radialGradient>
        <radialGradient id="ball"><stop stop-color="#fff"/><stop offset=".5" stop-color="#cdd5dc"/><stop offset="1" stop-color="#66798c"/></radialGradient>
        <linearGradient id="gr"><stop stop-color="#004f00"/><stop offset=".3" stop-color="#006200"/><stop offset=".5" stop-color="#005000"/><stop offset=".72" stop-color="#003900"/><stop offset=".9" stop-color="#001800"/><stop offset="1" stop-color="#001300"/></linearGradient>
        <linearGradient id="dk" x2="0" y2="1"><stop offset=".35" stop-color="#001800" stop-opacity="0"/><stop offset="1" stop-color="#001800" stop-opacity=".75"/></linearGradient>
        <radialGradient id="hl"><stop stop-color="#a8ffa8"/><stop offset=".3" stop-color="#86ee86" stop-opacity=".9"/><stop offset=".6" stop-color="#3aa53a" stop-opacity=".45"/><stop offset="1" stop-color="#006000" stop-opacity="0"/></radialGradient>
        <radialGradient id="q" cx=".4" cy=".3"><stop stop-color="#8fb1ff"/><stop offset="1" stop-color="#1e47b5"/></radialGradient>
        <linearGradient id="ay"><stop stop-color="#005a00"/><stop offset=".45" stop-color="#45f045"/><stop offset="1" stop-color="#006a00"/></linearGradient>
        <linearGradient id="ax" x2="0" y2="1"><stop stop-color="#00006a"/><stop offset=".5" stop-color="#2a2aff"/><stop offset="1" stop-color="#000070"/></linearGradient>
        <clipPath id="dome"><path d="M760 382h222v1.500c0 32-50 58.500-111 58.500s-111-26.500-111-58.500z"/></clipPath>
      </defs></svg>
      <div class="app">
        <div class="top">
          <div class="title">
            <div class="quick">
              <svg width="16" height="16" viewBox="0 0 24 24"><path d="M0 0h24v24H0z" fill="url(#teal)"/><path d="M0 13C8 4 14 3 24 2" fill="none" stroke="#067078"/><text x="8" y="21" font-size="12" font-weight="700" fill="#074b50" font-family="Liberation Sans" textLength="14">PV</text></svg>
              <b></b>
              <svg class="qa" width="8" height="8" viewBox="0 0 8 8"><path d="M0 1h8" stroke="#111"/><path d="M.5 3h7L4 7z" fill="#111"/></svg>
            </div>
            <div class="name">${t("PVElite - [Untitled]", 98)}</div>
            <div class="win">
              <span class="wmin"><svg width="12" height="4"><path d="M.5.500h11v3H.5z" fill="#fff" stroke="#555"/></svg></span>
              <span class="wres"><svg width="12" height="11" viewBox="0 0 12 11"><path d="M3.500.500h8v7h-8z" fill="#eee" stroke="#444"/><path d="M.5 2.500h8v8h-8z" fill="#fff" stroke="#444"/><path d="M3 5h3v3H3z" fill="#9aa" stroke="#444"/></svg></span>
              <span class="wclose"><svg width="12" height="10" viewBox="0 0 12 10"><path d="M2 1l8 8M10 1L2 9" stroke="#444" stroke-width="4"/><path d="M2 1l8 8M10 1L2 9" stroke="#fff" stroke-width="2.500"/></svg></span>
            </div>
          </div>
          <div class="tabs">
            <span class="file">${t("File", 18)}</span><span class="home">${t("Home", 30)}</span>
            <span class="m1">${t("Tools", 27)}</span><span class="m2">${t("View", 25)}</span><span class="m3">${t("3D", 15)}</span><span class="m4">${t("Diagnostics", 60)}</span><span class="m5">${t("ESL", 17)}</span><span>${t("Help", 24)}</span>
            <div class="opts">
              <svg class="chev" width="9" height="8" viewBox="0 0 9 8"><path d="M1 4l3.500-3L8 4M1 7.500l3.500-3 3.500 3" stroke="#fff" stroke-width="1.500" fill="none"/></svg>
              ${t("Options", 42)}
              <svg class="help" width="14" height="16" viewBox="0 0 14 16"><circle cx="7" cy="8" r="7" fill="url(#q)"/><text x="3.800" y="12" font-size="11" font-weight="700" fill="#fff" font-family="Liberation Sans">?</text></svg>
              <svg class="ig" width="82" height="23" viewBox="0 0 82 23"><path d="M-4 13C14 4 45-2 58 3c5 2 1 7-8 9 8-4 8-7 2-8C40 2 15 6-4 13z" fill="#9fa5aa"/><text x="11" y="18.500" font-size="14" font-weight="700" fill="#9ca1a5" font-family="Liberation Sans" textLength="70" lengthAdjust="spacingAndGlyphs"><tspan font-size="16">I</tspan>NTERGRAPH</text></svg>
            </div>
          </div>
        </div>
        <div class="ribbon">
          <div class="grp g0"><div class="body">${big("new", "New", 23)}${big("open", "Open...", 37, false)}${big("save", "Save", 23)}</div><div class="lab">${t("File", 18)}</div></div>
          <div class="grp g1"><div class="body"><div class="rows">${icons(["cylinder", "head", "cone", "flange"])}${icons(["dome2", "dome", "beam", "skirt"])}</div></div><div class="lab">${t("Elements", 46)}</div></div>
          <div class="grp g2"><div class="body"><div class="rows">${icons(["stiff", "span", "tubes", "saddle", "tray", "liquid", "insul", "plates", "lug", "bolt"])}${icons(["nozzle", "moment", "brace", "baffle", "leg", "insul2", "manway", "pad", "joint"])}</div></div><div class="lab">${t("Details", 35)}</div></div>
          <div class="grp g3"><div class="body">${big("input", "Input", 28)}<div class="rows">${icons(["cc"])}${icons(["keyfile"])}</div></div><div class="lab">${t("Input / Output", 76)}</div></div>
          <div class="grp g4"><div class="body"><div class="rows">${icons(["insert", "funnel", "mirror", "zoom2d", "nodes"])}${icons(["trash", "stack", "tank", "sphere"])}</div></div><div class="lab">${t("Utility", 30)}</div></div>
          <div class="grp g5"><div class="body"><div class="rows">${icons(["shell", "base", "quake", "hand", "compass", "swap"])}${icons(["script", "acad", "access", "list", "calc", "pdf3d"])}</div></div><div class="lab">${t("Auxiliary", 43)}</div></div>
          <div class="grp g6"><div class="body"><div class="rows">${icons(["run", "review"])}${icons(["errdoc", "find"])}</div></div><div class="lab">${t("Analyze", 39)}</div></div>
          <div class="grp g7"><div class="form"><span class="lb">${t("Units :", 33)}</span><div class="sel">${t("bars", 22)}${arrow}</div><span class="lb">${t("Design Code :", 72)}</span><div class="sel">${t("Division 1", 49)}${arrow}</div></div><div class="lab">${t("Units/Code", 58)}</div></div>
        </div>
        <div class="main">
          <div class="left">
            <div class="ph">${t("Design Constraints", 99)}<svg width="8" height="12" viewBox="0 0 8 12"><path d="M2 3.500h4v4H2zM5.500 3v5M0 7.500h8M4 8v4" stroke="#fff" fill="none"/></svg></div>
            <div class="pb">
              <div class="grid">
                <div class="tree"><svg width="8" height="8"><path d="M7.500.500v7h-7z" fill="#fff" stroke="#aaa"/></svg></div>
                <div class="tbl">
                  <div class="cat">${t("Design Data", 67)}</div>
                  ${rows.map(([k, kw, v, vw, b]) => html`<div class="r ${b === "dis" ? "dis" : ""}"><div class="k">${t(k, kw)}</div>${valueCell(v, vw, b)}</div>`)}
                </div>
                <div class="sb"><i class="up"></i><div class="thumb"><svg width="7" height="9"><path d="M0 1h7M0 4h7M0 7h7" stroke="#555"/></svg></div><i class="dn"></i></div>
              </div>
              <div class="desc"></div>
            </div>
            <div class="pt">${pageTabs.map(([l, w, i], n) => html`<div class=${n === 1 ? "on" : ""}><svg width="16" height="16" viewBox="0 0 16 16">${i}</svg>${t(l, w)}</div>`)}</div>
          </div>
          <div class="view">
            <svg class="canvas" viewBox="406 140 930 543" font-family="Liberation Sans">
              <g clip-path="url(#dome)"><path d="M760 382h222v60H760z" fill="url(#gr)"/><path d="M760 382h222v60H760z" fill="url(#dk)"/><ellipse cx="842" cy="382" rx="54" ry="22" fill="url(#hl)"/></g>
              <path d="M629 386.500h131" stroke="#ff0000" stroke-dasharray="18 4.500 4.500 5"/>
              <path d="M985 381.500h119M985 386.500h119" stroke="#ff0000"/>
              <path d="M1335.500 140v543" stroke="#555"/>
              <text x="573" y="389" font-size="9" fill="#f22" textLength="47">Datum Line</text>
              <text x="1124" y="389" font-size="9" fill="#f22" textLength="38">0.00 mm.</text>
              <text x="1169" y="389" font-size="9" fill="#f22" textLength="16">[10]</text>
              <path d="M472 591c15 0 27 12 27 28h-27z" fill="#c0c0c0"/><path d="M472 604c8 0 14 7 14 15h-14z" fill="#666"/>
              <path d="M467 587h7v30h-7z" fill="url(#ay)"/><path d="M465 588l5.500-7 5.500 7z" fill="#060"/>
              <path d="M474 616h29v7h-29z" fill="url(#ax)"/><path d="M502 614l6 5.500-6 5.500z" fill="#00004a"/>
              <circle cx="470" cy="619" r="5.800" fill="#e8191c"/><path d="M467 607h6l-4 12h6" stroke="#c11" fill="none"/>
              <path d="M467.500 563l3 6 3-6M470.500 569v7" stroke="#0e0" fill="none"/><path d="M510.500 607.500l7 12M517.500 607.500l-7 12" stroke="#22d" fill="none"/>
            </svg>
            <div class="vt"><span>${t("2D View", 42)}</span><span class="on">${t("3D View", 43)}</span></div>
          </div>
          <div class="tools"><div class="tb"><div class="dots"></div>
            ${tools.map((x) => x === "sep" ? html`<div class="sep"></div>` : x === "active"
              ? html`<div class="tool act"><svg viewBox="0 0 16 16"><path d="M6 3C1 4 1 10 4 13M10 13c5-1 5-7 2-10" fill="none" stroke="${N}" stroke-width="2.600"/><path d="M5 0l5 3.500L5 7zM11 9v7l-5-3.500z" fill="${N}"/></svg></div>`
              : html`<div class="tool"><svg viewBox="0 0 16 16">${x}</svg></div>`)}
            <svg class="more" width="8" height="7" viewBox="0 0 8 7"><path d="M0 0h2v6H0zM4 0l4 3.500L4 7z"/></svg>
          </div></div>
        </div>
        <div class="status">
          <span>${t("Ell Head Weight Cor: 185.479 Kgf  Vol Cor: 2.14777e+006 Cm.", 312)}</span>
          <div class="seg">
            ${cells.map(([s, w, cw, hot]) => html`<span class=${hot ? "box" : ""} style="width:${cw}px">${t(s, w)}</span>${hot ? html`<span class="gap"></span>` : nothing}`)}
            <span class="last">${t("SPLM", 28)}</span>
          </div>
        </div>
        <div class="task"></div>
      </div>
      <div class="mark"></div>`;
  }
}
